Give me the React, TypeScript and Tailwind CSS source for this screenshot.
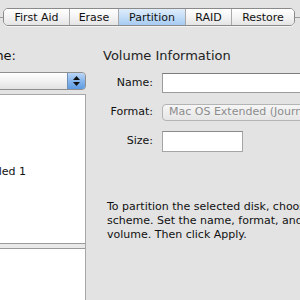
const tabs = [
  { label: 'First Aid', w: 'w-[65px]' },
  { label: 'Erase', w: 'w-[49px]' },
  { label: 'Partition', w: 'w-[67px]', active: true },
  { label: 'RAID', w: 'w-[46px]' },
  { label: 'Restore', w: 'w-[63px]' },
];

function TabBar() {
  return (
    <div className="flex items-center pt-[8px]">
      <div className="w-[3px] h-px bg-[#9c9c9c]" />
      <div className="flex h-[18px] rounded-[5px] border border-[#8a8a8a] overflow-hidden shadow-[0_1px_0_rgba(255,255,255,0.6)]">
        {tabs.map((t, i) => (
          <div
            key={t.label}
            className={`${t.w} flex items-center justify-center text-[11px] leading-none text-[#111] ${
              i > 0 ? 'border-l border-[#a9a9a9]' : ''
            } ${
              t.active
                ? 'bg-gradient-to-b from-[#e0edfb] via-[#c4ddf7] to-[#a6cbf2]'
                : 'bg-gradient-to-b from-[#ffffff] via-[#f4f4f4] to-[#e4e4e4]'
            }`}
          >
            {t.label}
          </div>
        ))}
      </div>
      <div className="flex-1 h-px bg-[#9c9c9c]" />
    </div>
  );
}

function LeftPanel() {
  return (
    <div className="w-[160px] ml-[-74px] shrink-0 flex flex-col">
      <div className="flex justify-end pr-[70px] text-[13px] leading-[16px] text-[#111] h-[16px] whitespace-nowrap">
        <span className="shrink-0">Volume Scheme:</span>
      </div>
      <div className="mt-[8px] flex h-[18px] rounded-[4px] border border-[#8f8f8f] overflow-hidden">
        <div className="flex-1 bg-gradient-to-b from-[#ffffff] via-[#f2f2f2] to-[#e2e2e2]" />
        <div className="w-[18px] border-l border-[#6f8fb5] bg-gradient-to-b from-[#bcd7f5] via-[#86b5ec] to-[#5d9be4] flex flex-col items-center justify-center gap-[2px]">
          <svg width="7" height="4" viewBox="0 0 7 4"><path d="M3.5 0 L7 4 L0 4 Z" fill="#111" /></svg>
          <svg width="7" height="4" viewBox="0 0 7 4"><path d="M0 0 L7 0 L3.5 4 Z" fill="#111" /></svg>
        </div>
      </div>
      <div className="mt-[4px] h-[220px] bg-white border-t border-r border-[#a7a7a7] flex flex-col">
        <div className="h-[84px] flex items-end justify-end pr-[59px] text-[11px] leading-[14px] text-[#111] whitespace-nowrap">
          Untitled 1
        </div>
        <div className="mt-[64px] h-[6px] border-y border-[#9a9a9a] bg-[#e9e9e9]" />
      </div>
    </div>
  );
}

function RightPanel() {
  return (
    <div className="flex-1 flex flex-col pl-[17px] text-[#111]">
      <div className="text-[13px] leading-[16px] h-[16px] text-[#222] whitespace-nowrap">Volume Information</div>
      <div className="mt-[9px] ml-[-17px] grid grid-cols-[67px_1fr] gap-x-[9px] items-center text-[11px]">
        <div className="text-right">Name:</div>
        <div className="h-[20px] bg-white border border-[#9b9b9b] border-t-[#7d7d7d] mr-[-10px]" />
        <div className="text-right mt-[11px]">Format:</div>
        <div className="mt-[11px] h-[17px] rounded-[4px] border border-[#b4b4b4] bg-gradient-to-b from-[#f6f6f6] to-[#e6e6e6] mr-[-10px] flex items-center pl-[6px] text-[#8c8c8c] whitespace-nowrap overflow-hidden">
          Mac OS Extended (Journaled)
        </div>
        <div className="text-right mt-[10px]">Size:</div>
        <div className="mt-[10px] w-[81px] h-[21px] bg-white border border-[#a5a5a5] border-t-[#8a8a8a]" />
      </div>
      <div className="mt-[48px] ml-[4px] text-[11px] leading-[14px] text-[#111] w-[280px] shrink-0">
        To partition the selected disk, choose a volume scheme. Set the name, format, and size for each volume. Then click Apply.
      </div>
    </div>
  );
}

export default function App() {
  return (
    <div className="w-[300px] h-[300px] overflow-hidden bg-[#e3e3e3] font-['DejaVu_Sans',sans-serif]">
      <TabBar />
      <div className="flex mt-[22px]">
        <LeftPanel />
        <RightPanel />
      </div>
    </div>
  );
}
